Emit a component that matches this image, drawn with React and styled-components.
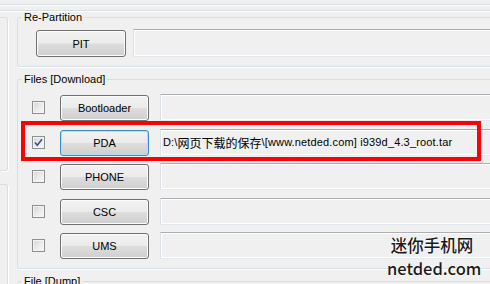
import React from 'react'
import styled, { createGlobalStyle } from 'styled-components'

const GlobalStyle = createGlobalStyle`
    html, body {
        margin: 0;
        padding: 0;
        background: #f0f0f0;
    }
    body {
        font-family: "Liberation Sans", Arial, "Noto Sans CJK SC", sans-serif;
        font-size: 11px;
        color: #000;
    }
`;

const Window = styled.div`
    position: relative;
    width: 490px;
    height: 284px;
    overflow: hidden;
    background: #f0f0f0;
`;

const TopRail = styled.div`
    display: flex;
    flex-direction: column;
    gap: 5px;
    padding-top: 4px;
`;

const Etch = styled.div`
    height: 1px;
    background: #d5dfe5;
    box-shadow: 0 1px 0 #fff;
`;

const Main = styled.div`
    display: flex;
    align-items: flex-start;
    gap: 9px;
    width: 620px;
`;

const SideColumn = styled.div`
    display: flex;
    flex-direction: column;
    gap: 13px;
    width: 8px;
    margin-top: 6px;
    flex: none;
`;

const SidePanel = styled.div`
    box-sizing: border-box;
    width: 8px;
    height: ${p => p.$h}px;
    border: 1px solid #d5dfe5;
    border-left: none;
    border-radius: 0 3px 3px 0;
    box-shadow: 1px 1px 0 #fff;
`;

const Groups = styled.div`
    flex: 1;
    display: flex;
    flex-direction: column;
    gap: 6px;
`;

const Group = styled.fieldset`
    margin: 0;
    padding: 0;
    min-width: 0;
    border: 1px solid #d5dfe5;
    border-radius: 3px;
    box-shadow: 1px 1px 0 #fff;
`;

const Legend = styled.legend`
    margin-left: 4px;
    padding: 0 2px;
    font-size: 11px;
    line-height: 13px;
`;

const PartitionBody = styled.div`
    display: flex;
    align-items: flex-end;
    gap: 7px;
    padding: 5px 0 9px 18px;
`;

const FilesBody = styled.div`
    display: flex;
    flex-direction: column;
    gap: 7.5px;
    padding: 8px 0 9px 14px;
`;

const Row = styled.div`
    position: relative;
    display: flex;
    align-items: flex-end;
    height: 27px;
`;

const Check = styled.span`
    box-sizing: border-box;
    flex: none;
    align-self: center;
    width: 13px;
    height: 13px;
    margin-right: 15px;
    border: 1px solid #8e8f8f;
    background: linear-gradient(135deg, #d4d4d4 0%, #ececec 55%, #f8f8f8 100%);
    box-shadow: inset 0 0 0 1px #f4f4f4;
    display: flex;
    align-items: center;
    justify-content: center;
`;

const Button = styled.button`
    box-sizing: border-box;
    flex: none;
    width: ${p => p.$w}px;
    height: ${p => p.$h}px;
    margin-right: ${p => p.$gap || 0}px;
    padding: 0;
    border: 1px solid ${p => (p.$focus ? '#3c8cc8' : '#707070')};
    border-radius: 3px;
    background: linear-gradient(#f2f2f2 0%, #ebebeb 48%, #dddddd 52%, #cfcfcf 100%);
    box-shadow: inset 0 0 0 1px ${p => (p.$focus ? '#a9e1fb' : '#fcfcfc')};
    font: 11px "Liberation Sans", Arial, sans-serif;
    color: #000;
`;

const Field = styled.div`
    box-sizing: border-box;
    flex: 1;
    height: ${p => p.$h}px;
    display: flex;
    align-items: center;
    padding-left: 2px;
    border: 1px solid #dbdfe6;
    border-top-color: #abadb3;
    border-bottom-color: #e3e9ef;
    border-radius: 1px;
    box-shadow: inset 0 0 0 1px #fff;
    background: #f0f0f0;
    white-space: nowrap;
    font-size: 11px;
    letter-spacing: 0.15px;
`;

const Cjk = styled.span`
    font-family: "Noto Sans CJK SC", sans-serif;
    font-size: 12px;
    letter-spacing: 0;
`;

const Highlight = styled.div`
    position: absolute;
    left: -11px;
    top: -7.5px;
    width: 460px;
    height: 40px;
    box-sizing: border-box;
    border: 4px solid #f00;
    pointer-events: none;
`;

const Watermark = styled.div`
    position: absolute;
    right: 13px;
    top: 234px;
    width: 90px;
    text-align: center;
    font-family: "Noto Sans CJK SC", sans-serif;
    font-size: 16.5px;
    font-weight: 500;
    line-height: 23px;
    color: #1a1a1a;
    text-shadow: 0 0 2px #fff, 0 0 2px #fff;
`;

const CheckMark = () => (
    <svg width="11" height="11" viewBox="0 0 11 11">
        <path d="M2 5.5 L4.3 8.3 L9 2.3" fill="none" stroke="#3d4f8f" strokeWidth="1.6" />
    </svg>
)

const files = [
    { name: 'Bootloader' },
    { name: 'PDA', checked: true, focus: true, marked: true },
    { name: 'PHONE' },
    { name: 'CSC' },
    { name: 'UMS' },
]

const App = () => {
    return (
        <Window>
            <GlobalStyle />
            <TopRail>
                <Etch />
                <Etch />
            </TopRail>
            <Main>
                <SideColumn>
                    <SidePanel $h={154} />
                    <SidePanel $h={120} />
                </SideColumn>
                <Groups>
                    <Group>
                        <Legend>Re-Partition</Legend>
                        <PartitionBody>
                            <Button $w={90} $h={27}>PIT</Button>
                            <Field $h={28} />
                        </PartitionBody>
                    </Group>
                    <Group>
                        <Legend>Files [Download]</Legend>
                        <FilesBody>
                            {files.map(f => (
                                <Row key={f.name}>
                                    <Check>{f.checked ? <CheckMark /> : null}</Check>
                                    <Button $w={89} $h={26} $gap={11} $focus={f.focus}>{f.name}</Button>
                                    <Field $h={27}>
                                        {f.name === 'PDA' ? (
                                            <>D:\<Cjk>网页下载的保存</Cjk>\[www.netded.com] i939d_4.3_root.tar</>
                                        ) : null}
                                    </Field>
                                    {f.marked ? <Highlight /> : null}
                                </Row>
                            ))}
                        </FilesBody>
                    </Group>
                    <Group>
                        <Legend>File [Dump]</Legend>
                        <FilesBody />
                    </Group>
                </Groups>
            </Main>
            <Watermark>
                迷你手机网<br />netded.com
            </Watermark>
        </Window>
    )
}

export default App
